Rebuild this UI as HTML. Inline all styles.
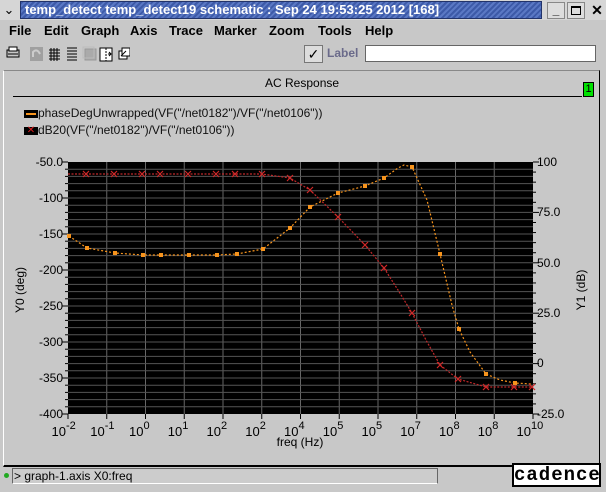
<!DOCTYPE html>
<html><head><style>
*{margin:0;padding:0;box-sizing:border-box}
body{width:606px;height:492px;background:#c8c8c8;font-family:"Liberation Sans",sans-serif;position:relative;overflow:hidden}
.abs{position:absolute}
.m{position:absolute;top:23px;font-size:13px;font-weight:bold}
</style></head><body>
<div class="abs" style="left:0;top:0;width:606px;height:20px;background:#d6d6d6"></div>
<div class="abs" style="left:0;top:0;width:18px;height:20px;font-size:13px;text-align:center;line-height:20px">&#8964;</div>
<div class="abs" style="left:20px;top:1px;width:522px;height:18px;background:repeating-linear-gradient(135deg,#3d5aa8 0 2px,#5a78c4 2px 4px);border:1px solid #22336a"></div>
<div class="abs" style="left:25px;top:2px;color:#fff;font-size:13px;font-weight:bold;white-space:nowrap;line-height:16px">temp_detect temp_detect19 schematic : Sep 24 19:53:25 2012 [168]</div>
<div class="abs" style="left:547px;top:2px;width:18px;height:17px;border:1px solid #888;background:#ddd;font-size:12px;text-align:center;font-weight:bold">_</div>
<div class="abs" style="left:567px;top:2px;width:18px;height:17px;border:1px solid #888;background:#ddd"><div style="margin:3px;width:10px;height:9px;border:1px solid #000;border-top-width:2px"></div></div>
<div class="abs" style="left:588px;top:2px;width:18px;height:17px;font-size:14px;font-weight:bold;text-align:center">✕</div>
<div class="m" style="left:9px">File</div>
<div class="m" style="left:44px">Edit</div>
<div class="m" style="left:81px">Graph</div>
<div class="m" style="left:130px">Axis</div>
<div class="m" style="left:169px">Trace</div>
<div class="m" style="left:214px">Marker</div>
<div class="m" style="left:269px">Zoom</div>
<div class="m" style="left:318px">Tools</div>
<div class="m" style="left:365px">Help</div>
<svg class="abs" style="left:5px;top:45px" width="125" height="18">
<rect x="2" y="5" width="12" height="7" fill="none" stroke="#000"/><rect x="4" y="2" width="8" height="4" fill="#fff" stroke="#000"/><line x1="3" y1="9" x2="13" y2="9" stroke="#000"/>
<rect x="25" y="2" width="13" height="14" fill="#a0a0a0"/><path d="M28 12 L28 7 Q32 3 35 9" stroke="#ccc" fill="none" stroke-width="2"/>
<path d="M44 5h11M44 8h11M44 11h11M44 14h11M46 3v13M49 3v13M52 3v13" stroke="#000"/>
<path d="M62 3h10M62 6h10M62 9h10M62 12h10M62 15h10" stroke="#000"/>
<rect x="80" y="4" width="11" height="11" fill="#aaa" stroke="#999"/><rect x="78" y="2" width="11" height="11" fill="none" stroke="#bbb"/>
<rect x="95" y="3" width="12" height="13" fill="#fff" stroke="#000"/><line x1="101" y1="3" x2="101" y2="16" stroke="#000" stroke-dasharray="2 1"/><path d="M103 9h3M104 7l2 2-2 2" stroke="#000" fill="none"/>
<rect x="114" y="6" width="8" height="8" fill="#fff" stroke="#000"/><rect x="117" y="3" width="8" height="8" fill="#fff" stroke="#000"/><path d="M116 11l5-5" stroke="#000"/>
</svg>
<div class="abs" style="left:304px;top:45px;width:19px;height:18px;border:1px solid #777;background:#ddd;font-size:14px;line-height:16px;text-align:center">✓</div>
<div class="abs" style="left:327px;top:46px;font-size:12px;font-weight:bold;color:#6a6a8a">Label</div>
<div class="abs" style="left:365px;top:45px;width:231px;height:17px;background:#fff;border:1px solid #666"></div>
<div class="abs" style="left:3px;top:70px;width:597px;height:397px;border-left:1px solid #fff;border-top:1px solid #888;border-right:1px solid #000;border-bottom:2px solid #000"></div>
<div class="abs" style="left:265px;top:76px;font-size:12px">AC Response</div>
<div class="abs" style="left:13px;top:96px;width:569px;height:1px;background:#000"></div>
<div class="abs" style="left:583px;top:82px;width:11px;height:15px;background:#00e000;border:1px solid #000;font-size:11px;text-align:center;line-height:13px">1</div>
<div class="abs" style="left:24px;top:110px;width:14px;height:8px;background:#000"><div style="margin:3px 2px;height:2px;background:#f7941d"></div></div>
<div class="abs" style="left:38px;top:106px;font-size:12px;color:#111">phaseDegUnwrapped(VF("/net0182")/VF("/net0106"))</div>
<div class="abs" style="left:24px;top:127px;width:14px;height:8px;background:#000;color:#e02020;font-size:10px;line-height:8px;text-align:center">✕</div>
<div class="abs" style="left:38px;top:123px;font-size:12px;color:#111">dB20(VF("/net0182")/VF("/net0106"))</div>
<svg class="abs" style="left:0;top:0" width="606" height="492" font-family="Liberation Sans, sans-serif" font-size="12">
<rect x="68" y="162" width="465" height="252" fill="#000"/>
<g id="grid"></g>
<g fill="#000">
<text x="63" y="166" text-anchor="end">-50.0</text>
<text x="63" y="202" text-anchor="end">-100</text>
<text x="63" y="238" text-anchor="end">-150</text>
<text x="63" y="274" text-anchor="end">-200</text>
<text x="63" y="310" text-anchor="end">-250</text>
<text x="63" y="346" text-anchor="end">-300</text>
<text x="63" y="382" text-anchor="end">-350</text>
<text x="63" y="418" text-anchor="end">-400</text>
<text x="537" y="166">100</text>
<text x="537" y="216">75.0</text>
<text x="537" y="267">50.0</text>
<text x="537" y="317">25.0</text>
<text x="537" y="367">0</text>
<text x="537" y="418">-25.0</text>
<text transform="translate(24,290) rotate(-90)" text-anchor="middle">Y0 (deg)</text>
<text transform="translate(585,290) rotate(-90)" text-anchor="middle">Y1 (dB)</text>
<text x="300" y="446" text-anchor="middle">freq (Hz)</text>
</g>
<g id="xl" font-size="13"></g>
<g id="curves"></g>
</svg>
<div class="abs" style="left:4px;top:469px;width:5px;height:5px;border-radius:50%;background:#2a2;margin-top:4px"></div>
<div class="abs" style="left:12px;top:468px;width:426px;height:16px;background:#ccc;border:1px solid #666;border-bottom-color:#fff;font-size:12px;line-height:14px;padding-left:1px">&gt; graph-1.axis X0:freq</div>
<div class="abs" style="left:512px;top:463px;width:89px;height:24px;background:#fff;border:2px solid #000;font-family:'Liberation Mono',monospace;font-weight:bold;font-size:19px;letter-spacing:1px;line-height:20px;text-align:center">cadence</div>
<script>
var g=document.getElementById('grid'),s='';
for(var i=1;i<12;i++){var x=68+i*38.75;s+='<line x1="'+x+'" y1="162" x2="'+x+'" y2="414" stroke="#666"/>';}
for(var j=1;j<35;j++){var y=162+j*7.2;s+='<line x1="68" y1="'+y+'" x2="533" y2="'+y+'" stroke="#555"/>';}
for(var j=0;j<=35;j++){var y=162+j*7.2,l=(j%5==0)?6:3;s+='<line x1="'+(68-l)+'" y1="'+y+'" x2="68" y2="'+y+'" stroke="#000"/>';}
for(var j=0;j<=25;j++){var y=162+j*10.08,l=(j%5==0)?6:3;s+='<line x1="533" y1="'+y+'" x2="'+(533+l)+'" y2="'+y+'" stroke="#000"/>';}
for(var i=0;i<=12;i++){var x=68+i*38.75;s+='<line x1="'+x+'" y1="414" x2="'+x+'" y2="419" stroke="#000"/>';}
g.innerHTML=s;
var ex=['-2','-1','0','1','2','2','4','5','5','7','8','8','10'],t='';
for(var i=0;i<=12;i++){var x=68+i*38.75;t+='<text x="'+(x-2)+'" y="436" text-anchor="end">10</text><text x="'+(x-2)+'" y="429" font-size="11">'+ex[i]+'</text>';}
document.getElementById('xl').innerHTML=t;
var o=[[69,236],[87,248],[115,253],[143,255],[161,255],[189,255],[217,255],[237,254],[263,249],[290,228],[310,207],[338,193],[365,186],[384,178],[398,168],[404,165],[412,167],[427,200],[440,254],[452,305],[459,329],[470,352],[486,374],[500,380],[515,383],[532,384]];
var r=[[68,174],[86,174],[114,174],[142,174],[160,174],[188,174],[216,174],[235,174],[262,174],[290,178],[310,190],[338,217],[365,245],[384,268],[398,290],[412,313],[426,340],[440,365],[458,379],[486,387],[514,387],[532,387]];
function pl(a){return a.map(function(p){return p.join(',')}).join(' ');}
var c='<polyline points="'+pl(r)+'" fill="none" stroke="#c0282a" stroke-width="1.2" stroke-dasharray="2 1.5"/>';
c+='<polyline points="'+pl(o)+'" fill="none" stroke="#f7941d" stroke-width="1.2" stroke-dasharray="2 2"/>';
[86,114,142,160,188,216,235,262,290,310,338,365,384,412,440,458,486,514,532].forEach(function(x){var p=r.find(function(q){return q[0]==x});if(p)c+='<path d="M'+(p[0]-3)+' '+(p[1]-3)+'l6 6m0-6l-6 6" stroke="#d02828" stroke-width="1.2"/>';});
[69,87,115,143,161,189,217,237,263,290,310,338,365,384,412,440,459,486,515].forEach(function(x){var p=o.find(function(q){return q[0]==x});if(p)c+='<rect x="'+(p[0]-2)+'" y="'+(p[1]-2)+'" width="4" height="4" fill="#f7941d"/>';});
document.getElementById('curves').innerHTML=c;
</script>
</body></html>
